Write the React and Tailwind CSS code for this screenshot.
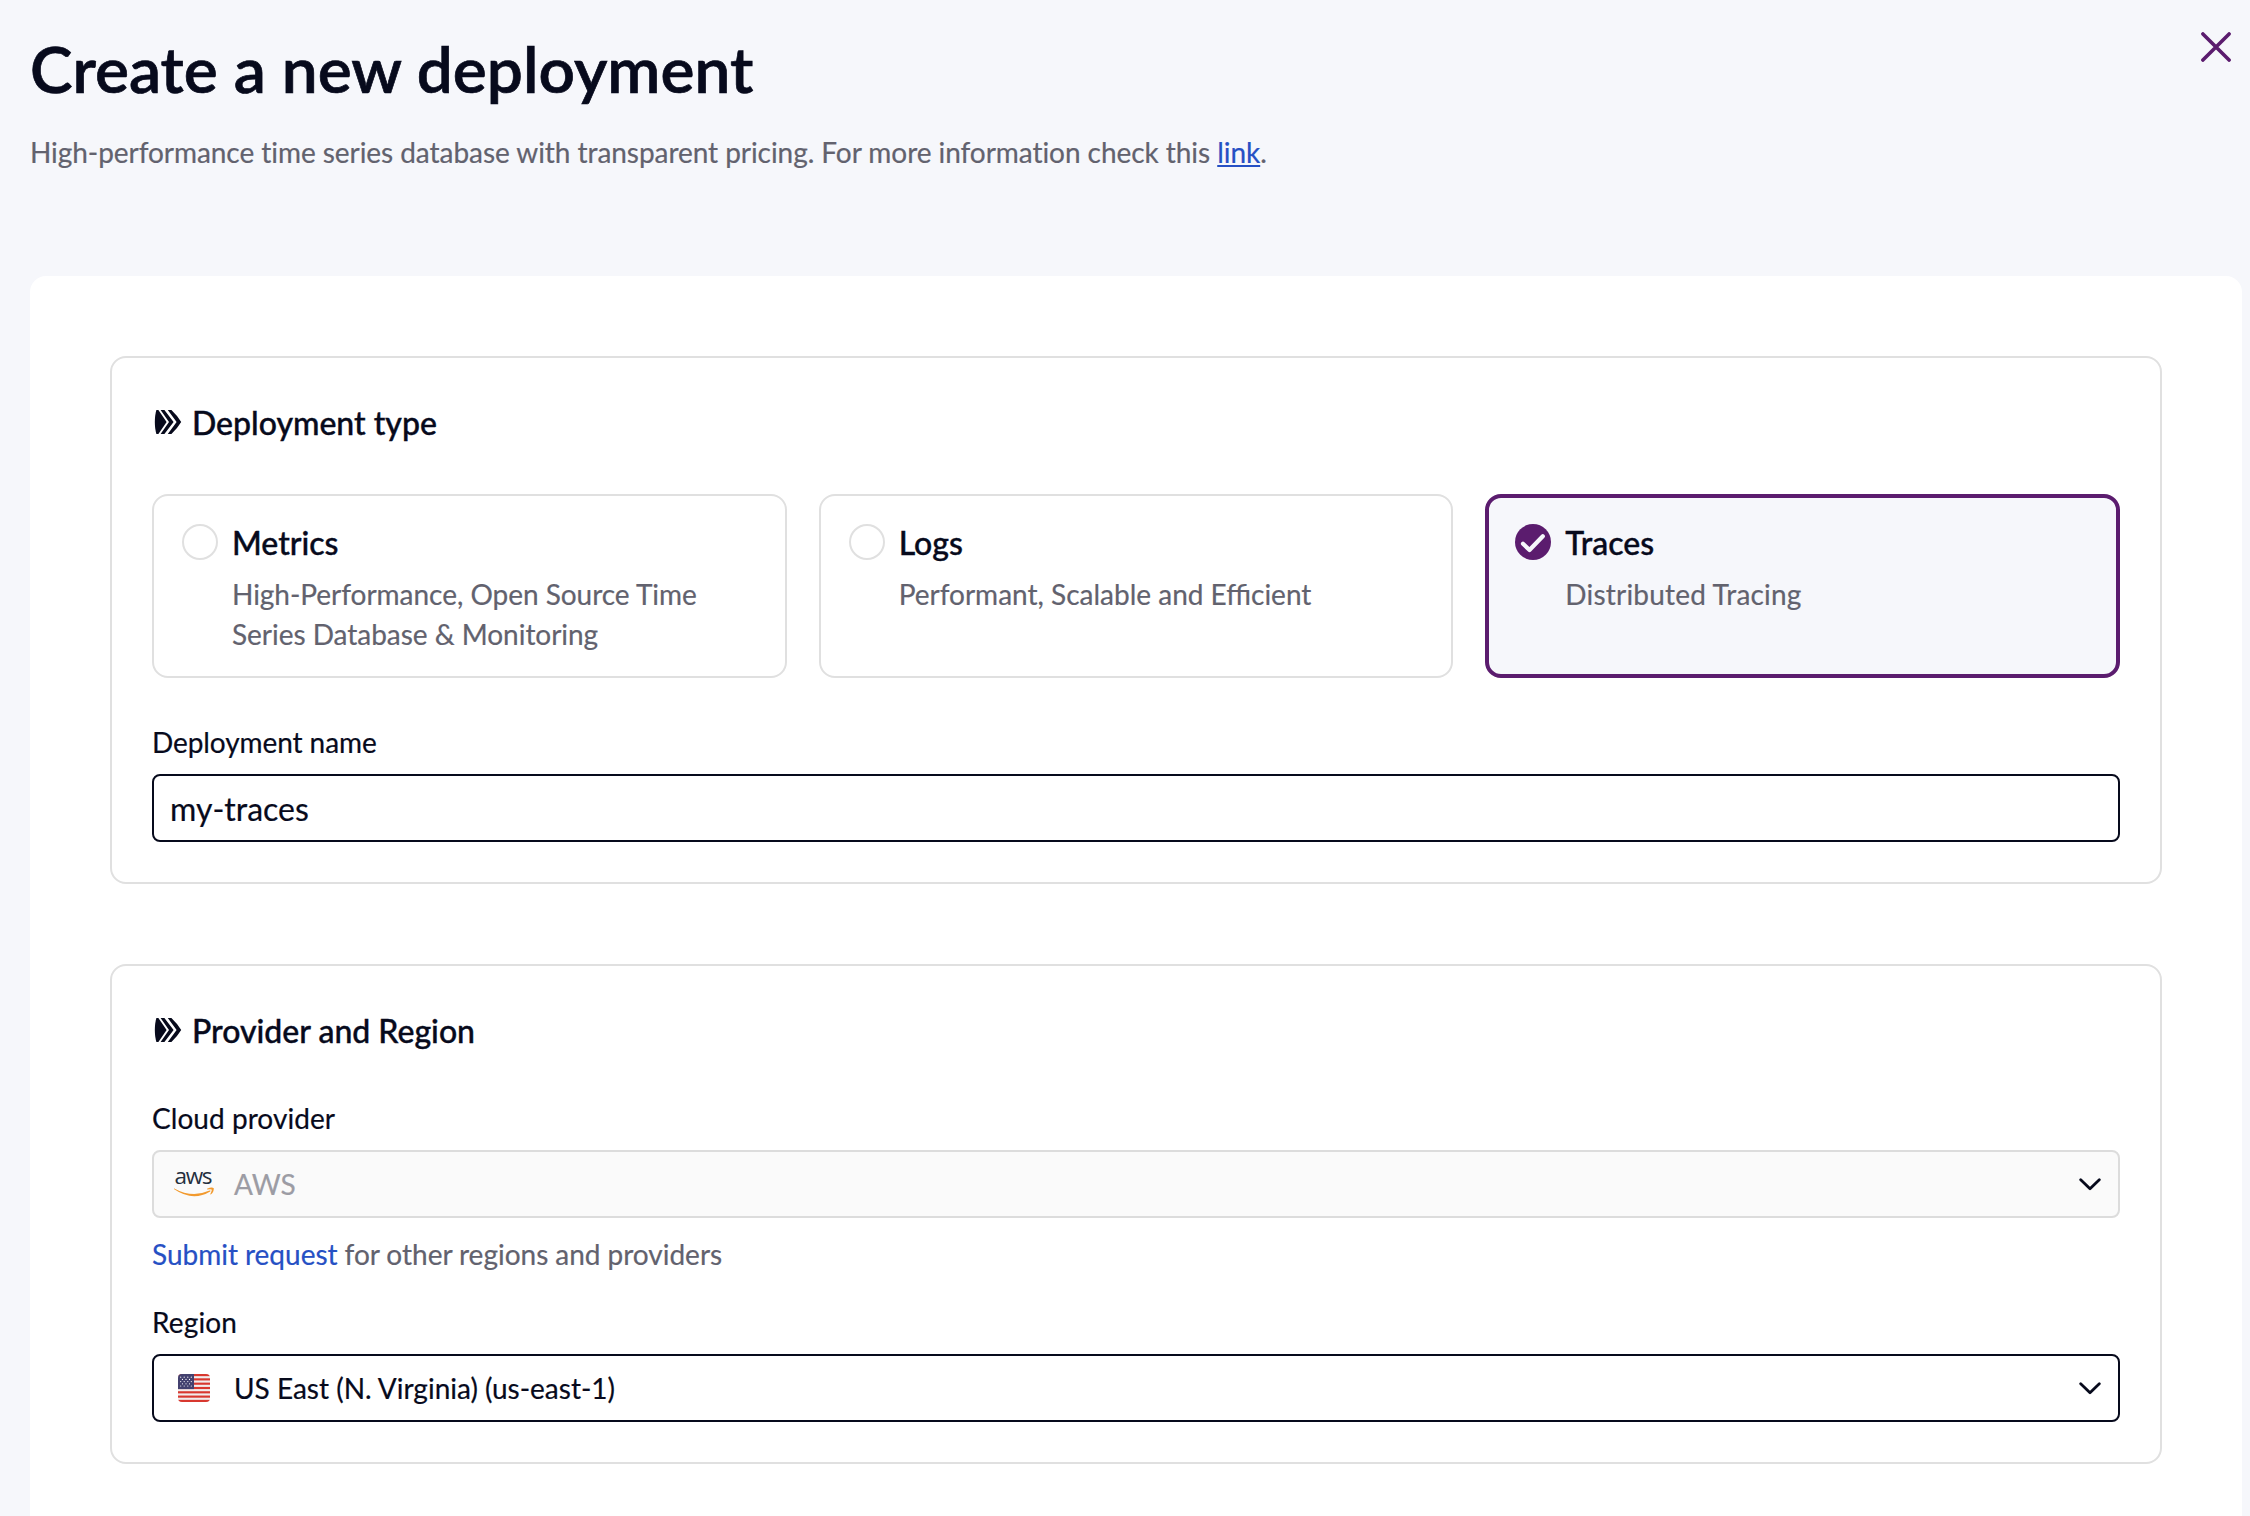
import React, { useState } from 'react';

const deploymentTypes = [
  { id: 'metrics', title: 'Metrics', description: 'High-Performance, Open Source Time Series Database & Monitoring', tracking: 'tracking-[-0.03px]' },
  { id: 'logs', title: 'Logs', description: 'Performant, Scalable and Efficient', tracking: 'tracking-normal' },
  { id: 'traces', title: 'Traces', description: 'Distributed Tracing', tracking: 'tracking-[0.2px]' },
];

const CloseIcon = () => (
  <svg width="30" height="30" viewBox="0 0 30 30" fill="none" stroke="#5b1c6e" strokeWidth="3.6" strokeLinecap="round">
    <path d="M1.9 1.9 28.1 28.1M28.1 1.9 1.9 28.1" />
  </svg>
);

const SectionIcon = () => (
  <svg width="28" height="24" viewBox="0 0 28 24" fill="#070a1c">
    <path d="M2.4 0H4.4L12.6 12 4.4 24H2.4C.3 17 .3 7 2.4 0Z" />
    <path d="M6.6 0H10.4L19.6 12 10.4 24H6.6L15 12Z" />
    <path d="M13.8 0H17.4Q23.4 5.6 27.2 12 23.4 18.4 17.4 24H13.8L22.6 12Z" />
  </svg>
);

const ChevronIcon = () => (
  <svg width="22" height="13" viewBox="0 0 22 13" fill="none" stroke="#070a1c" strokeWidth="2.8" strokeLinecap="round" strokeLinejoin="round">
    <path d="M1.7 1.7 11 10.8 20.3 1.7" />
  </svg>
);

const AwsLogo = () => (
  <svg className="overflow-visible" width="40" height="26" viewBox="0 0 40 26">
    <text x="0.6" y="13.2" textLength="38" className="font-['Open_Sans',sans-serif] text-[22.5px] font-medium" fill="#252f3e">
      aws
    </text>
    <path d="M.3 17.4Q18 27.4 35.6 19.6 37 19.2 36.2 20.4 19 31 .2 18.3-.3 17.2.3 17.4Z" fill="#f29a2e" />
    <path d="M33 17.8Q38 15.4 39.8 17.2 40 21 36.8 23.4 36 23.6 36.5 22.4 38.2 19 37.6 18.4 36 17.8 33.2 18.6Z" fill="#f29a2e" />
  </svg>
);

const stripes = [0, 2, 4, 6, 8, 10, 12];
const starRows = [0, 1, 2, 3, 4];

const UsFlag = () => (
  <svg width="32" height="28" viewBox="0 0 32 28">
    <clipPath id="flag">
      <rect width="32" height="28" rx="4" />
    </clipPath>
    <g clipPath="url(#flag)">
      <rect width="32" height="28" fill="#f1eded" />
      {stripes.map((i) => (
        <rect key={i} y={(i * 28) / 13} width="32" height={28 / 13} fill="#d8382f" />
      ))}
      <rect width="16" height="15.08" fill="#43416f" />
      {starRows.map((row) =>
        (row % 2 ? [4.5, 8, 11.5] : [2.7, 6.2, 9.8, 13.3]).map((x) => (
          <circle key={`${row}-${x}`} cx={x} cy={3.2 + row * 2.2} r=".6" fill="#fff" />
        ))
      )}
    </g>
  </svg>
);

const Radio = ({ checked }) =>
  checked ? (
    <svg className="shrink-0" width="36" height="36" viewBox="0 0 36 36" fill="none">
      <circle cx="18" cy="18" r="18" fill="#5b1c6e" />
      <path d="M8 19.8 14.5 26 27.8 12.2" stroke="#f6f7fb" strokeWidth="4.2" strokeLinecap="round" strokeLinejoin="round" />
    </svg>
  ) : (
    <span className="size-9 shrink-0 rounded-full border-2 border-[#e0e0e0] bg-white" />
  );

const Section = ({ title, children }) => (
  <section className="rounded-2xl border-2 border-[#e0e0e0] px-10 pt-11 pb-10">
    <h2 className="flex h-10 items-start gap-[10px] pl-0.5 text-[32px] leading-10 font-medium [-webkit-text-stroke-width:0.4px]">
      <span className="flex h-10 items-center">
        <SectionIcon />
      </span>
      <span className="pt-px">{title}</span>
    </h2>
    {children}
  </section>
);

const SelectBox = ({ icon, label, disabled }) => (
  <button
    disabled={disabled}
    className={`flex h-[68px] w-full items-center rounded-lg border-2 pr-[17px] pl-5 text-left ${
      disabled ? 'border-[#dcdcdc] bg-[#fafafa] text-[#9c9ca4]' : 'border-[#070a1c] bg-white'
    }`}
  >
    <span className="flex w-10 justify-center">{icon}</span>
    <span className="ml-5 flex-1">{label}</span>
    <ChevronIcon />
  </button>
);

const App = () => {
  const [type, setType] = useState('traces');
  const [name, setName] = useState('my-traces');

  return (
    <div className="flex h-[1516px] flex-col overflow-hidden bg-[#f6f7fb] pr-2 pl-[30px] font-['Lato',sans-serif] text-[28px] leading-10 text-[#070a1c] [-webkit-text-stroke-width:0.2px]">
      <header className="flex items-start justify-between pt-7 pr-[11px]">
        <div>
          <h1 className="pt-px text-[64px] leading-[80px] font-semibold [-webkit-text-stroke-width:0.7px]">Create a new deployment</h1>
          <p className="mt-[23px] tracking-[-0.055px] text-[#62626e]">
            High-performance time series database with transparent pricing. For more information check this{' '}
            <a href="#" className="text-[#2650c4] underline">link</a>.
          </p>
        </div>
        <button className="mt-1" aria-label="Close">
          <CloseIcon />
        </button>
      </header>

      <main className="mt-[104px] flex flex-1 flex-col gap-20 rounded-t-2xl bg-white p-20">
        <Section title="Deployment type">
          <div className="mt-[52px] grid grid-cols-3 gap-8">
            {deploymentTypes.map((item) => (
              <button
                key={item.id}
                onClick={() => setType(item.id)}
                className={`flex h-[184px] items-start gap-3.5 rounded-2xl text-left ${
                  type === item.id
                    ? 'border-4 border-[#5b1c6e] bg-[#f6f7fb] px-[26px] pt-[26px]'
                    : 'border-2 border-[#e0e0e0] bg-white px-7 pt-7'
                }`}
              >
                <Radio checked={type === item.id} />
                <span className="-mt-px flex flex-col gap-[11px]">
                  <span className="text-[32px] font-medium [-webkit-text-stroke-width:0.4px]">{item.title}</span>
                  <span className={`text-[#62626e] ${item.tracking}`}>{item.description}</span>
                </span>
              </button>
            ))}
          </div>
          <label className="mt-11 block tracking-[-0.08px]">
            Deployment name
            <input
              value={name}
              onChange={(e) => setName(e.target.value)}
              className="mt-3 block h-[68px] w-full rounded-lg border-2 border-[#070a1c] px-4 text-[32px] tracking-normal outline-none"
            />
          </label>
        </Section>

        <Section title="Provider and Region">
          <p className="mt-12 mb-3 tracking-[0.05px]">Cloud provider</p>
          <SelectBox icon={<AwsLogo />} label="AWS" disabled />
          <p className="mt-4 [word-spacing:-0.2px] text-[#62626e]">
            <a href="#" className="text-[#2650c4]">Submit request</a> for other regions and providers
          </p>
          <p className="mt-7 mb-3 tracking-[0.15px]">Region</p>
          <SelectBox icon={<UsFlag />} label="US East (N. Virginia) (us-east-1)" />
        </Section>
      </main>
    </div>
  );
};

export default App;
